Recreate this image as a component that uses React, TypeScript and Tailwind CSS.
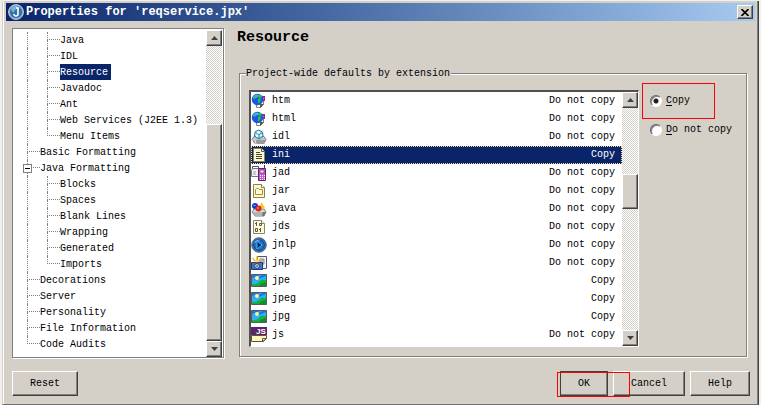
import React, { useState } from 'react';

interface TreeNode {
  label: string;
  depth: number;
  last?: boolean;
  open?: boolean;
}

interface Extension {
  name: string;
  action: string;
  icon: React.ReactNode;
}

const Icon: React.FC<{ children: React.ReactNode }> = ({ children }) => (
  <svg viewBox="0 0 16 16" width="16" height="16" className="block" aria-hidden="true">
    {children}
  </svg>
);

const HtmlIcon = () => (
  <Icon>
    <path d="M5.500 7.500h7v4l-3 3h-4z" fill="#fffde8" stroke="#8a8466" />
    <path d="M9 15v-4h4z" fill="#5c573c" />
    <path d="M10 3h4v5h-4z" fill="#a0268c" />
    <path d="M11 5h2v1h-2z" fill="#d877c8" />
    <circle cx="6.500" cy="6.500" r="5.700" fill="#1857e8" />
    <path d="M2 4.500a5.500 5.500 0 0 1 4-3l2 1-2 2H4L3 6z" fill="#6aa8f8" />
    <path d="M7 2h3l1 2-2 1-2-1zM7 6l2-1 1 2-2 3-1 0 0-2zM3 4l2-1 1 1-2 2z" fill="#23c838" />
  </Icon>
);

const IdlIcon = () => (
  <Icon>
    <path d="M3 7.500h10l2 3-2 4H4l-3-4z" fill="#c4c4c4" stroke="#808080" />
    <path d="M1.500 11H15l-2 4H4z" fill="#9a9a9a" />
    <path d="M5 15l-1-4H1.500" stroke="#e4e4e4" fill="none" />
    <path d="M7.500 1l4 2 .5 4-4 3-4.500-3 .500-4z" fill="#b9e6f6" stroke="#1b7ca4" />
    <path d="M4.500 3.500l3.500 2 3.500-2M8 5.500V9" fill="none" stroke="#2a86b2" />
    <path d="M6 2.500h3v2H6zM5 6h2v2H5zM9 6h2v1H9z" fill="#f4fdff" />
  </Icon>
);

const IniIcon = () => (
  <Icon>
    <path d="M2.500 1.500h8l3 3v10h-11z" fill="#fffbd0" stroke="#8a8256" />
    <path d="M10.500 1.500v3h3" fill="#fff" stroke="#5b553a" />
    <path d="M5 5.500h4M5 7.500h6M5 9.500h6M5 11.500h6" stroke="#4a452d" />
  </Icon>
);

const JadIcon = () => (
  <Icon>
    <path d="M1.500 1.500h6v2h-6z" fill="#fff" stroke="#555" />
    <path d="M.500 5.500l1-2h6l1 2v6h-8z" fill="#f0f0f0" stroke="#777" />
    <path d="M2 6h3v4H2z" fill="#c9c9d2" />
    <path d="M7.500 3.500h7v12h-7z" fill="#c45ec8" stroke="#64206c" />
    <path d="M13.500 0v4" stroke="#64206c" />
    <path d="M9 5h4v3H9z" fill="#f7dbf8" stroke="#64206c" strokeWidth="0.6" />
    <path d="M9 10h1v1H9zM11 10h1v1h-1zM13 10h1v1h-1zM9 12h1v1H9zM11 12h1v1h-1zM13 12h1v1h-1zM9 14h1v1H9zM11 14h1v1h-1zM13 14h1v1h-1z" fill="#fff" />
  </Icon>
);

const JarIcon = () => (
  <Icon>
    <path d="M2.500 1.500h8l3 3v10h-11z" fill="#fff7c8" stroke="#8c8250" />
    <path d="M10.500 1.500v3h3" fill="#fff" stroke="#8c8250" />
    <path d="M4.500 6.500l1-1h2l1 1h3v5h-7z" fill="#fffbe0" stroke="#a8902c" />
  </Icon>
);

const JavaIcon = () => (
  <Icon>
    <path d="M3 8h10l2 3-2 4H4l-3-4z" fill="#d8d8d8" stroke="#808080" />
    <path d="M1.500 11H15l-2 4H4z" fill="#b4b4b4" />
    <path d="M12 11h3l-2 4h-2z" fill="#737373" />
    <circle cx="4" cy="5" r="3" fill="#1038cc" />
    <path d="M2.500 4h2v1h-2z" fill="#8cb0ff" />
    <path d="M10.500 1l3.500 6-2 1-4-.500z" fill="#f8c820" />
    <circle cx="7.500" cy="7.500" r="3" fill="#dd2418" />
    <path d="M6 6.500h2v1H6z" fill="#ff9a83" />
  </Icon>
);

const JdsIcon = () => (
  <Icon>
    <path d="M2.500 1.500h8l3 3v10h-11z" fill="#fffbdc" stroke="#8c8568" />
    <path d="M10.500 1.500v3h3" fill="#fff" stroke="#8c8568" />
    <path d="M5.500 3v4M4 4.500h1M8.500 4.500h2v2h-2zM4.500 9.500h2v3h-2zM9.500 9v4M8 10.500h1" fill="none" stroke="#5c573e" />
  </Icon>
);

const JnlpIcon = () => (
  <Icon>
    <circle cx="8" cy="8" r="7.300" fill="#3c6ea0" stroke="#5a6c80" />
    <circle cx="8" cy="8" r="5.300" fill="#1a70dc" stroke="#0e4488" />
    <path d="M3.500 6a5 5 0 0 1 5-3" fill="none" stroke="#6cc4ff" />
    <path d="M6 4l5 4-5 4z" fill="#0a1c4c" stroke="#44b8f4" />
  </Icon>
);

const JnpIcon = () => (
  <Icon>
    <path d="M6.500 1.500h9v12h-9z" fill="#f2f2ea" stroke="#4c557a" />
    <path d="M9 4h4v5H9z" fill="#b4bdd0" stroke="#77809c" strokeWidth="0.8" />
    <path d="M.500 7.500h11v7H.500z" fill="#4470c8" stroke="#22386e" />
    <circle cx="6" cy="11" r="2.300" fill="#fff" stroke="#22386e" />
    <circle cx="6" cy="11" r="1" fill="#3c62b4" />
    <path d="M6 6V1M4 6L1.500 3M8 6l2.500-3" stroke="#eab818" strokeWidth="1.200" />
    <path d="M4 7l2-3 2 3z" fill="#fff270" stroke="#eab818" strokeWidth="0.6" />
  </Icon>
);

const ImageIcon = () => (
  <Icon>
    <path d="M.500 1.500h15v12H.500z" fill="#1878e4" stroke="#5a5a5a" />
    <path d="M1 7l7-1 7-3v5l-8 5H1z" fill="#28b4f4" />
    <path d="M1 5l8-3h2L1 8z" fill="#48a0f0" />
    <path d="M1 11c3 1 6-1 8-3s4-1 6-1v6H1z" fill="#18b03c" />
    <path d="M8 13c2-3 4-3 7-4v4z" fill="#0c9030" />
    <circle cx="6" cy="5" r="2" fill="#fff8a0" />
  </Icon>
);

const JsIcon = () => (
  <Icon>
    <path d="M0 0h16v8H0z" fill="#5c2468" />
    <path d="M.500 8.500h15v3l-3 3H.500z" fill="#fff6c0" stroke="#5e5634" />
    <path d="M11.500 14.500v-3h4z" fill="#fff" stroke="#5e5634" />
    <text x="5" y="7" fontFamily="Liberation Sans, sans-serif" fontSize="8" fontWeight="700" fill="#fff">JS</text>
  </Icon>
);

const AppIcon = () => (
  <Icon>
    <circle cx="8" cy="8" r="7.500" fill="#8fa2b4" stroke="#d5dde4" strokeWidth="0.800" />
    <circle cx="8" cy="8" r="6" fill="#2f71ad" />
    <path d="M3 5a6 6 0 0 1 7-3L5 9z" fill="#79b2dc" />
    <path d="M10 4v6a2 2 0 0 1-4 0M8 4h3" fill="none" stroke="#fff" strokeWidth="1.600" />
  </Icon>
);

const tree: TreeNode[] = [
  { label: 'Java', depth: 1 },
  { label: 'IDL', depth: 1 },
  { label: 'Resource', depth: 1 },
  { label: 'Javadoc', depth: 1 },
  { label: 'Ant', depth: 1 },
  { label: 'Web Services (J2EE 1.3)', depth: 1 },
  { label: 'Menu Items', depth: 1, last: true },
  { label: 'Basic Formatting', depth: 0 },
  { label: 'Java Formatting', depth: 0, open: true },
  { label: 'Blocks', depth: 1 },
  { label: 'Spaces', depth: 1 },
  { label: 'Blank Lines', depth: 1 },
  { label: 'Wrapping', depth: 1 },
  { label: 'Generated', depth: 1 },
  { label: 'Imports', depth: 1, last: true },
  { label: 'Decorations', depth: 0 },
  { label: 'Server', depth: 0 },
  { label: 'Personality', depth: 0 },
  { label: 'File Information', depth: 0 },
  { label: 'Code Audits', depth: 0, last: true },
];

const extensions: Extension[] = [
  { name: 'htm', action: 'Do not copy', icon: <HtmlIcon /> },
  { name: 'html', action: 'Do not copy', icon: <HtmlIcon /> },
  { name: 'idl', action: 'Do not copy', icon: <IdlIcon /> },
  { name: 'ini', action: 'Copy', icon: <IniIcon /> },
  { name: 'jad', action: 'Do not copy', icon: <JadIcon /> },
  { name: 'jar', action: 'Do not copy', icon: <JarIcon /> },
  { name: 'java', action: 'Do not copy', icon: <JavaIcon /> },
  { name: 'jds', action: 'Do not copy', icon: <JdsIcon /> },
  { name: 'jnlp', action: 'Do not copy', icon: <JnlpIcon /> },
  { name: 'jnp', action: 'Do not copy', icon: <JnpIcon /> },
  { name: 'jpe', action: 'Copy', icon: <ImageIcon /> },
  { name: 'jpeg', action: 'Copy', icon: <ImageIcon /> },
  { name: 'jpg', action: 'Copy', icon: <ImageIcon /> },
  { name: 'js', action: 'Do not copy', icon: <JsIcon /> },
];

const raised =
  'bg-[#d4d0c8] border border-t-white border-l-white border-r-[#404040] border-b-[#404040] shadow-[inset_-1px_-1px_0_#808080]';

interface ScrollBarProps {
  before: string;
  thumb: string;
}

const ScrollBar: React.FC<ScrollBarProps> = ({ before, thumb }) => (
  <div className="flex flex-col w-4 shrink-0 bg-[repeating-conic-gradient(#ffffff_0_25%,#d4d0c8_0_50%)] bg-[length:2px_2px]">
    <button aria-label="Scroll up" className={`h-4 flex items-center justify-center ${raised}`}>
      <svg width="7" height="4" viewBox="0 0 7 4"><path d="M3.500 0L7 4H0z" fill="#404040" /></svg>
    </button>
    <div className={before} />
    <div className={`${thumb} ${raised}`} />
    <div className="flex-1" />
    <button aria-label="Scroll down" className={`h-4 flex items-center justify-center ${raised}`}>
      <svg width="7" height="4" viewBox="0 0 7 4"><path d="M0 0h7L3.500 4z" fill="#404040" /></svg>
    </button>
  </div>
);

const Branch: React.FC<{ last?: boolean }> = ({ last }) => (
  <span className="flex flex-col w-[13px] h-4">
    <span className="h-2 border-l border-b border-dotted border-[#808080]" />
    <span className={last ? 'h-2' : 'h-2 border-l border-dotted border-[#808080]'} />
  </span>
);

const TreeRow: React.FC<{ node: TreeNode; selected: boolean; onSelect: () => void }> = ({ node, selected, onSelect }) => (
  <li role="treeitem" aria-selected={selected} className="relative flex h-4 leading-[18px]">
    {node.depth === 1 && <span className="w-5 border-l border-dotted border-[#808080]" />}
    <Branch last={node.last} />
    {node.open && (
      <span className="absolute top-1 -left-1 w-[9px] h-[9px] flex items-center justify-center bg-white border border-[#808080]">
        <span className="w-[5px] h-px bg-black" />
      </span>
    )}
    <button onClick={onSelect} className={selected ? 'h-4 pr-[3px] bg-[#0a246a] text-white' : 'h-4 pr-[3px]'}>
      {node.label}
    </button>
  </li>
);

interface RadioProps {
  accessKey: string;
  rest: string;
  checked: boolean;
  onChange: () => void;
}

const Radio: React.FC<RadioProps> = ({ accessKey, rest, checked, onChange }) => (
  <label className="flex items-center gap-1 h-4 leading-4">
    <input
      type="radio"
      name="mode"
      checked={checked}
      onChange={onChange}
      className="appearance-none w-3 h-3 rounded-full bg-white border border-t-[#606060] border-l-[#606060] border-r-white border-b-white shadow-[inset_1px_1px_0_#808080] checked:bg-[radial-gradient(circle,#202020_2px,#ffffff_3px)]"
    />
    <span>
      <u className="underline-offset-2">{accessKey}</u>
      {rest}
    </span>
  </label>
);

const DialogButton: React.FC<{ label: string; isDefault?: boolean }> = ({ label, isDefault }) => (
  <button className={`h-[25px] px-[17px] leading-[18px] ${raised} ${isDefault ? 'outline outline-[#404040] -outline-offset-1' : ''}`}>
    {label}
  </button>
);

const App: React.FC = () => {
  const [page, setPage] = useState('Resource');
  const [copy, setCopy] = useState(true);

  return (
    <div className="flex bg-[#f0f0ec] pl-[2px] pr-[2px] pt-px min-h-screen text-[10px] text-black font-['Liberation_Mono',monospace]">
      <div className="flex-1 flex flex-col bg-[#d4d0c8] border-l border-r border-b border-l-[#d4d0c8] border-r-[#404040] border-b-[#707070] shadow-[inset_1px_0_0_#ffffff,inset_-1px_0_0_#808080]">
        <header className="flex items-center h-[18px] mt-[2px] ml-[3px] mr-[3px] pl-[2px] pr-[2px] bg-linear-to-r from-[#0a246a] to-[#a6caf0]">
          <AppIcon />
          <h1 className="flex-1 pl-[2px] text-xs leading-4 font-bold text-white">Properties for 'reqservice.jpx'</h1>
          <button aria-label="Close" className={`w-4 h-[14px] flex items-center justify-center ${raised}`}>
            <svg width="8" height="7" viewBox="0 0 8 7"><path d="M.500 0l7 7M7.500 0l-7 7" stroke="#000" strokeWidth="1.600" /></svg>
          </button>
        </header>

        <main className="flex flex-1 gap-[15px] pt-[7px] pl-[9px] pr-[11px]">
          <nav className="flex w-[212px] h-[330px] shrink-0 bg-white border border-[#808080] shadow-[1px_1px_0_#ffffff] pt-px pr-px">
            <ul role="tree" className="flex-1 pt-[2px] pl-[14px] whitespace-pre">
              {tree.map((node) => (
                <TreeRow key={node.label} node={node} selected={page === node.label} onSelect={() => setPage(node.label)} />
              ))}
            </ul>
            <ScrollBar before="h-[78px]" thumb="h-[217px]" />
          </nav>

          <section className="flex-1 min-w-0">
            <h2 className="-ml-[2px] text-[15px] leading-5 font-bold">{page}</h2>
            <fieldset className="mt-[17px] border border-[#808080] shadow-[1px_1px_0_#ffffff,inset_1px_1px_0_#ffffff] pl-[9px] pr-[9px] pb-[9px]">
              <legend className="-ml-[3px] pr-px bg-[#d4d0c8] leading-[18px] h-4">Project-wide defaults by extension</legend>
              <div className="flex gap-[11px] pt-[9px]">
                <div className="flex flex-1 bg-white border-t-2 border-l-2 border-b border-r border-t-[#505050] border-l-[#505050] border-b-white border-r-white">
                  <div className="flex-1 pb-[2px]">
                    <table className="w-full border-collapse">
                      <tbody>
                        {extensions.map((ext) => (
                          <tr
                            key={ext.name}
                            className={
                              ext.name === 'ini'
                                ? 'h-[18px] leading-[18px] bg-[#0a246a] text-white outline-1 outline-dotted -outline-offset-1 outline-[#f5db95]'
                                : 'h-[18px] leading-[18px]'
                            }
                          >
                            <td className="w-[21px] p-0">{ext.icon}</td>
                            <td className="p-0 align-bottom">{ext.name}</td>
                            <td className="p-0 pr-[7px] text-right align-bottom">{ext.action}</td>
                          </tr>
                        ))}
                      </tbody>
                    </table>
                  </div>
                  <ScrollBar before="h-[66px]" thumb="h-[35px]" />
                </div>

                <div className="flex flex-col gap-[13px] w-[87px] pt-[3px]">
                  <div className="relative">
                    <Radio accessKey="C" rest="opy" checked={copy} onChange={() => setCopy(true)} />
                    <div className="absolute -top-[10px] -left-2 w-[73px] h-9 border border-[#ff0000] pointer-events-none" />
                  </div>
                  <Radio accessKey="D" rest="o not copy" checked={!copy} onChange={() => setCopy(false)} />
                </div>
              </div>
            </fieldset>
          </section>
        </main>

        <footer className="flex gap-[5px] pt-3 pb-2 pl-[9px] pr-2">
          <DialogButton label="Reset" />
          <div className="flex-1" />
          <div className="relative">
            <DialogButton label="OK" isDefault />
            <div className="absolute top-px -left-[3px] z-10 w-[73px] h-[25px] border border-[#ff0000] pointer-events-none" />
          </div>
          <DialogButton label="Cancel" />
          <DialogButton label="Help" />
        </footer>
      </div>
    </div>
  );
};

export default App;
